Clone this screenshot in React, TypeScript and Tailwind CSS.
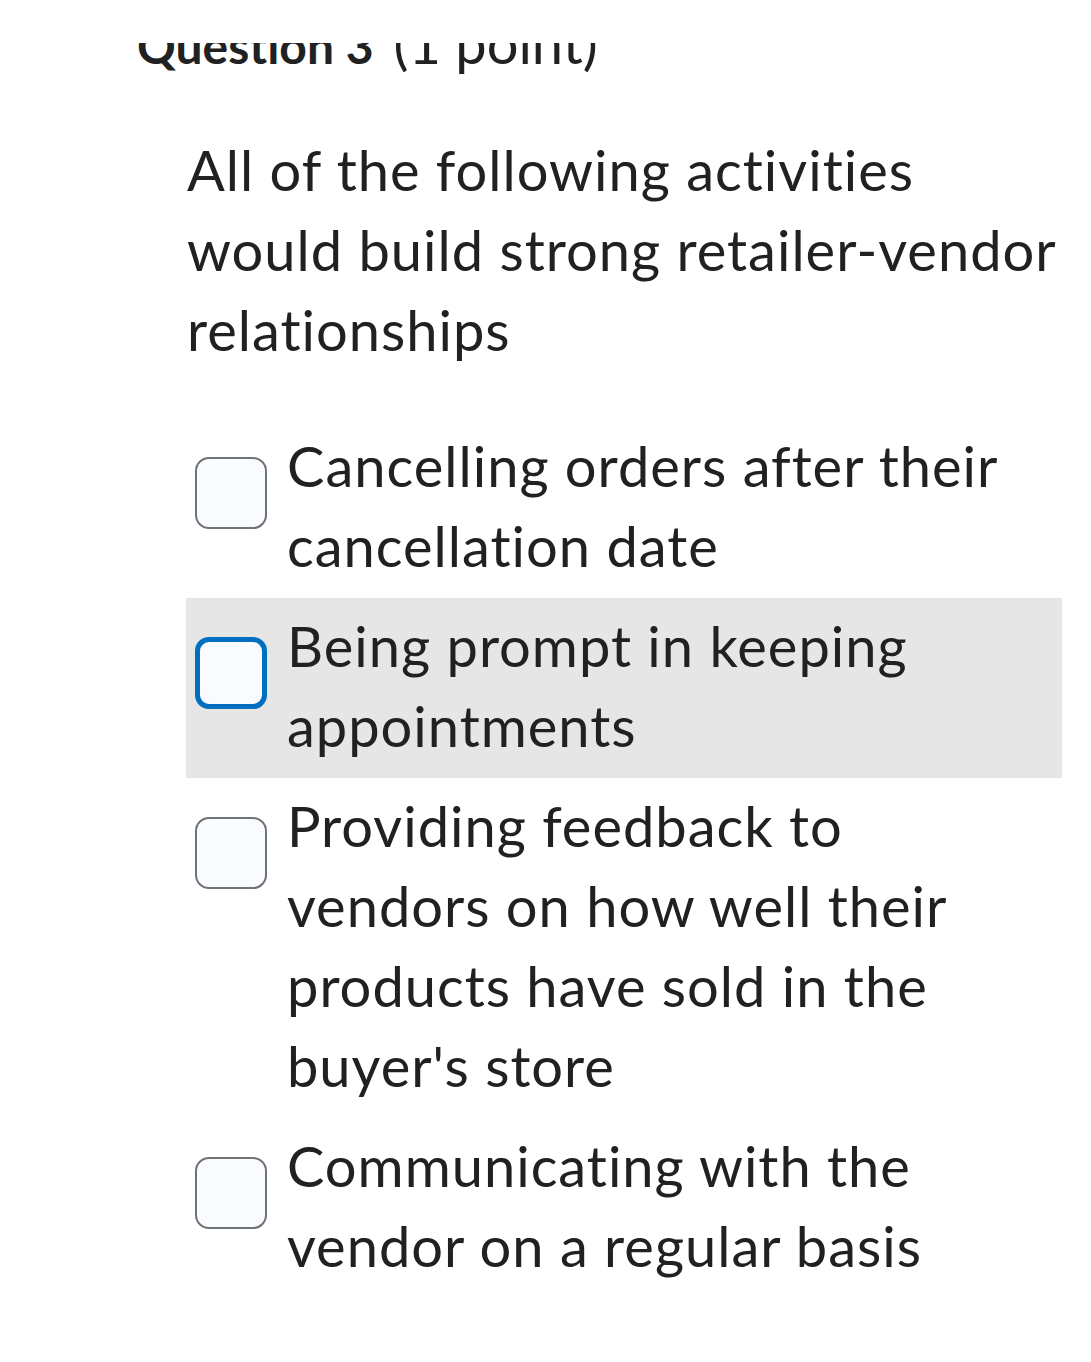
import React from "react";

type Option = { label: string; focused?: boolean };

const options: Option[] = [
  { label: "Cancelling orders after their cancellation date" },
  { label: "Being prompt in keeping appointments", focused: true },
  { label: "Providing feedback to vendors on how well their products have sold in the buyer's store" },
  { label: "Communicating with the vendor on a regular basis" },
];

function Checkbox({ focused }: { focused?: boolean }) {
  return (
    <span
      className={
        focused
          ? "mt-[31px] block h-[72px] w-[72px] shrink-0 rounded-[14px] border-[5px] border-[#006fbf] bg-[#f9fbff]"
          : "mt-[31px] block h-[72px] w-[72px] shrink-0 rounded-[14px] border-2 border-[#6e7376] bg-[#f9fbff]"
      }
    />
  );
}

export default function App() {
  return (
    <div className="min-h-screen w-full bg-white font-['Lato','Noto_Sans',sans-serif] text-[#202122] [font-variant-ligatures:none]">
      {/* heading is cut off by the scroll edge */}
      <div className="mt-[43px] h-[32px] overflow-hidden pl-[137px]">
        <h2 className="mt-[-28px] text-[48px] leading-none whitespace-nowrap">
          <span className="font-bold">Question 3</span>
          <span className="ml-[20px] text-[56px] font-normal">(1 point)</span>
        </h2>
      </div>

      <div className="mr-[29px] ml-[187px] mt-[55px]">
        <p className="text-[56px] leading-[80px] tracking-[1px]">
          All of the following activities would build strong retailer-vendor relationships
        </p>

        <ul className="mt-[48px] -ml-px">
          {options.map((o) => (
            <li
              key={o.label}
              className={
                o.focused
                  ? "flex gap-[20px] bg-[#e6e6e6] pt-[8px] pb-[12px] pl-[9px] pr-[22px]"
                  : "flex gap-[20px] pt-[8px] pb-[12px] pl-[9px] pr-[22px]"
              }
            >
              <Checkbox focused={o.focused} />
              <span className="text-[56px] leading-[80px] tracking-[1px]">{o.label}</span>
            </li>
          ))}
        </ul>
      </div>
    </div>
  );
}
